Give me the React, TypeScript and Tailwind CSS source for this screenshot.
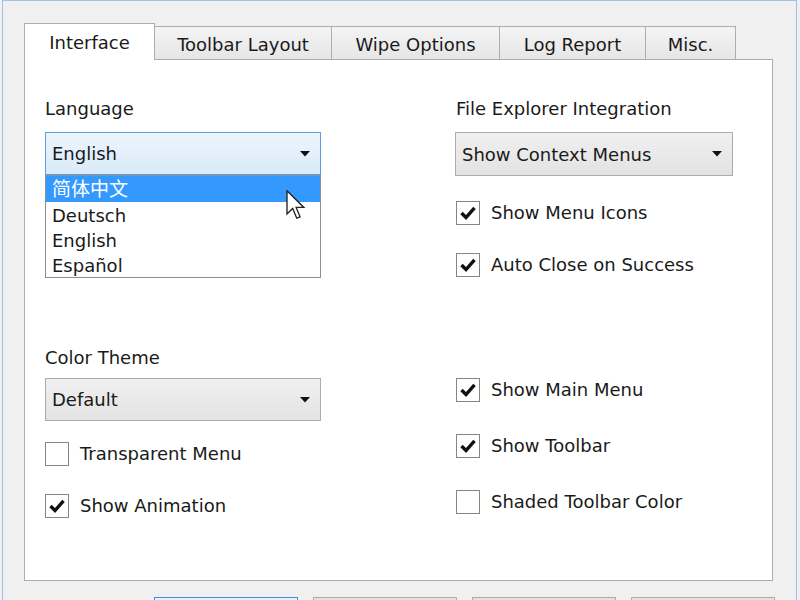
import React from "react";

function Arrow() {
  return (
    <svg width="10" height="6" viewBox="0 0 10 6" className="shrink-0">
      <path d="M0 0 L10 0 L5 5.5 Z" fill="#111" />
    </svg>
  );
}

function Check({ checked, label }: { checked: boolean; label: string }) {
  return (
    <div className="flex items-center h-[24px]">
      <div className="w-[24px] h-[24px] border border-[#858585] bg-white flex items-center justify-center shrink-0">
        {checked && (
          <svg width="20" height="20" viewBox="0 0 20 20">
            <path d="M3.5 10 L8 14.5 L16.5 4.8" fill="none" stroke="#111" strokeWidth="3.4" />
          </svg>
        )}
      </div>
      <span className="ml-[11px] leading-[24px] whitespace-nowrap">{label}</span>
    </div>
  );
}

function Cursor() {
  return (
    <svg
      width="20"
      height="30"
      viewBox="0 0 13 20"
      className="absolute left-[240px] top-[14px] z-30"
    >
      <path
        d="M0.5 0.5 L0.5 16 L4.3 12.3 L7 18.8 L9.2 17.9 L6.6 11.6 L11.7 11.6 Z"
        fill="#fff"
        stroke="#222"
        strokeWidth="0.9"
        strokeLinejoin="miter"
      />
    </svg>
  );
}

export default function App() {
  const tabBase =
    "h-[33px] border border-b-0 border-l-0 border-[#adadad] bg-gradient-to-b from-[#f4f4f4] to-[#e6e6e6] flex items-center justify-center pt-[2px]";
  return (
    <div className="w-[800px] h-[600px] bg-[#f0f0f0] overflow-hidden pl-[2px] pr-[3px] font-['DejaVu_Sans','Noto_Sans_CJK_SC',sans-serif] text-[18px] text-[#1a1a1a]">
      <div className="h-full border-x border-t border-[#9ec2e8] pl-[21px] pt-[22px]">
        <div className="flex items-end h-[36px] relative z-10">
          <div className="w-[131px] h-[37px] -mb-px bg-white border border-b-0 border-[#adadad] flex items-center justify-center">
            Interface
          </div>
          <div className={`w-[177px] ${tabBase}`}>Toolbar Layout</div>
          <div className={`w-[168px] ${tabBase}`}>Wipe Options</div>
          <div className={`w-[146px] ${tabBase}`}>Log Report</div>
          <div className={`w-[90px] ${tabBase}`}>Misc.</div>
        </div>
        <div className="w-[749px] h-[522px] border border-[#adadad] bg-white flex">
          <div className="ml-[20px] w-[276px] pt-[38px] flex flex-col">
            <div className="h-[22px] leading-[22px]">Language</div>
            <div className="relative mt-[12px]">
              <div className="h-[43px] border border-[#5a9fe2] bg-gradient-to-b from-[#edf5fd] to-[#d9eafb] flex items-center justify-between pl-[6px] pr-[10px]">
                <span>English</span>
                <Arrow />
              </div>
              <div className="absolute left-0 top-full w-full h-[103px] border border-[#8c8f95] bg-white z-20">
                <div className="h-[26px] bg-[#3399ff] text-white flex items-center pl-[6px] text-[19px]">
                  简体中文
                </div>
                <div className="h-[26px] flex items-center pl-[6px]">Deutsch</div>
                <div className="h-[25px] flex items-center pl-[6px]">English</div>
                <div className="h-[25px] flex items-center pl-[6px]">Español</div>
                <Cursor />
              </div>
            </div>
            <div className="h-[22px] leading-[22px] mt-[172px]">Color Theme</div>
            <div className="mt-[9px] h-[43px] border border-[#acacac] bg-gradient-to-b from-[#f0f0f0] to-[#e3e3e3] flex items-center justify-between pl-[6px] pr-[10px]">
              <span>Default</span>
              <Arrow />
            </div>
            <div className="mt-[21px]">
              <Check checked={false} label="Transparent Menu" />
            </div>
            <div className="mt-[28px]">
              <Check checked={true} label="Show Animation" />
            </div>
          </div>
          <div className="ml-[134px] w-[278px] pt-[38px] flex flex-col">
            <div className="h-[22px] leading-[22px] ml-px">File Explorer Integration</div>
            <div className="mt-[12px] h-[44px] border border-[#acacac] bg-gradient-to-b from-[#f0f0f0] to-[#e3e3e3] flex items-center justify-between pl-[6px] pr-[10px]">
              <span>Show Context Menus</span>
              <Arrow />
            </div>
            <div className="mt-[25px] ml-px">
              <Check checked={true} label="Show Menu Icons" />
            </div>
            <div className="mt-[28px] ml-px">
              <Check checked={true} label="Auto Close on Success" />
            </div>
            <div className="mt-[101px] ml-px">
              <Check checked={true} label="Show Main Menu" />
            </div>
            <div className="mt-[32px] ml-px">
              <Check checked={true} label="Show Toolbar" />
            </div>
            <div className="mt-[32px] ml-px">
              <Check checked={false} label="Shaded Toolbar Color" />
            </div>
          </div>
        </div>
        <div className="mt-[16px] flex gap-[15px] pl-[130px]">
          <div className="w-[144px] h-[30px] border border-[#4a90d9] bg-[#e5f1fb]" />
          <div className="w-[144px] h-[30px] border border-[#adadad] bg-[#e1e1e1]" />
          <div className="w-[144px] h-[30px] border border-[#adadad] bg-[#e1e1e1]" />
          <div className="w-[144px] h-[30px] border border-[#adadad] bg-[#e1e1e1]" />
        </div>
      </div>
    </div>
  );
}
